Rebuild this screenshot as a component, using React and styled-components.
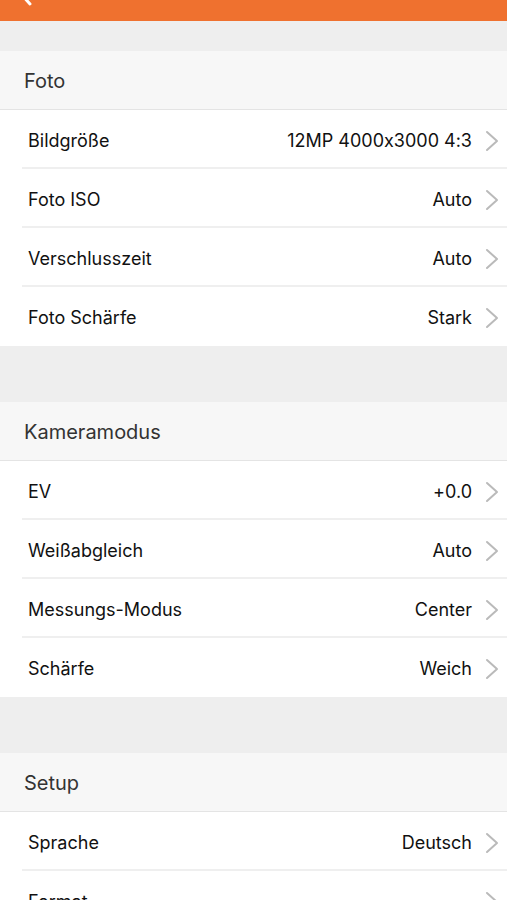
import styled, { createGlobalStyle } from 'styled-components'

const GlobalStyle = createGlobalStyle`
  html, body {
    margin: 0;
    padding: 0;
    background: #eeeeee;
    font-family: Inter, "Liberation Sans", Arial, sans-serif;
    font-feature-settings: "calt" 0;
  }
`;

const Page = styled.div`
  width: 507px;
  height: 900px;
  overflow: hidden;
  background: #eeeeee;
`;

const TopBar = styled.div`
  height: 21px;
  background: #ef712f;
  display: flex;
  align-items: flex-start;
  padding-left: 18px;
  overflow: hidden;
`;

const BackIcon = styled.svg`
  margin-top: -18px;
  flex-shrink: 0;
`;

const Gap = styled.div`
  height: ${({ $h }) => $h}px;
  background: #eeeeee;
`;

const Section = styled.div`
  display: flex;
  flex-direction: column;
`;

const Header = styled.div`
  height: 59px;
  display: flex;
  align-items: center;
  padding: 2px 0 0 24px;
  box-sizing: border-box;
  background: #f7f7f7;
  color: #333333;
  font-size: 20px;
  border-bottom: 1px solid #e4e4e4;
`;

const Row = styled.div`
  height: 59px;
  background: #ffffff;
  display: flex;
  align-items: center;
  padding: 2px 7px 0 28px;
  position: relative;
  color: #111111;
  font-size: 18px;
  box-sizing: border-box;

  &:not(:last-child)::after {
    content: '';
    position: absolute;
    left: 22px;
    right: 0;
    bottom: 0;
    height: 2px;
    background: #efefef;
  }
`;

const Label = styled.span`
  flex: 1;
`;

const Value = styled.span`
  margin-right: 12px;
`;

const Chevron = () => (
  <svg width="16" height="22" viewBox="0 0 16 22">
    <path d="M3 2 L13 11 L3 20" fill="none" stroke="#bababa" strokeWidth="2" strokeLinecap="round" strokeLinejoin="round" />
  </svg>
);

const sections = [
  {
    title: 'Foto',
    rows: [
      ['Bildgröße', '12MP 4000x3000 4:3'],
      ['Foto ISO', 'Auto'],
      ['Verschlusszeit', 'Auto'],
      ['Foto Schärfe', 'Stark'],
    ],
  },
  {
    title: 'Kameramodus',
    rows: [
      ['EV', '+0.0'],
      ['Weißabgleich', 'Auto'],
      ['Messungs-Modus', 'Center'],
      ['Schärfe', 'Weich'],
    ],
  },
  {
    title: 'Setup',
    rows: [
      ['Sprache', 'Deutsch'],
      ['Format', ''],
    ],
  },
];

export default function App() {
  return (
    <>
      <GlobalStyle />
      <Page>
        <TopBar>
          <BackIcon width="16" height="24" viewBox="0 0 16 24">
            <path d="M12 2 L3 12 L12 22" fill="none" stroke="#ffffff" strokeWidth="3" strokeLinecap="round" strokeLinejoin="round" />
          </BackIcon>
        </TopBar>
        {sections.map((s, i) => (
          <Section key={s.title}>
            <Gap $h={i === 0 ? 30 : 56} />
            <Header>{s.title}</Header>
            {s.rows.map(([label, value]) => (
              <Row key={label}>
                <Label>{label}</Label>
                {value && <Value>{value}</Value>}
                <Chevron />
              </Row>
            ))}
          </Section>
        ))}
      </Page>
    </>
  );
}
